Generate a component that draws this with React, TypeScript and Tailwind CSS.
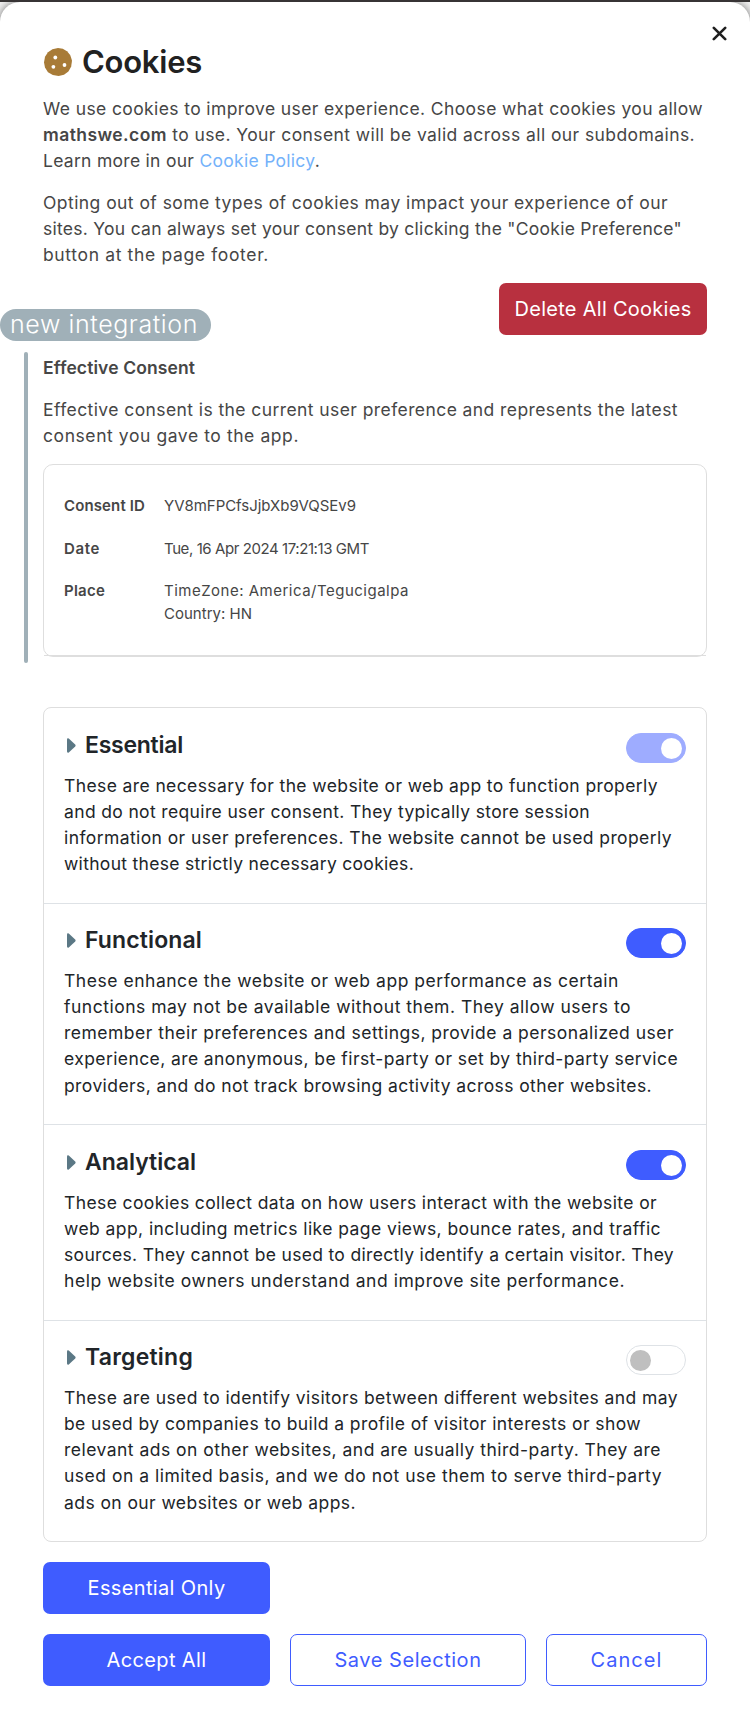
import { useLayoutEffect, useRef, type ReactNode } from "react";

/** A single line of text, tracked out or in so that it fills a given measure. */
function Line({ w, children, className = "" }: { w: number; children: ReactNode; className?: string }) {
  const ref = useRef<HTMLSpanElement>(null);
  useLayoutEffect(() => {
    const el = ref.current;
    if (!el) return;
    el.style.letterSpacing = "0px";
    const natural = el.getBoundingClientRect().width;
    const count = (el.textContent ?? "").length;
    el.style.letterSpacing = `${(w - natural) / count}px`;
  }, [w]);
  return (
    <span ref={ref} className={`block w-max whitespace-nowrap ${className}`}>
      {children}
    </span>
  );
}

type TextLine = [string, number];

function Switch({ on, disabled = false }: { on: boolean; disabled?: boolean }) {
  return (
    <button
      type="button"
      role="switch"
      aria-checked={on}
      className={`flex h-[30px] w-[60px] shrink-0 items-center rounded-full border px-[3px] ${
        on ? "justify-end border-[#3f5cff] bg-[#3f5cff]" : "justify-start border-[#dee2e6] bg-white"
      } ${disabled ? "opacity-50" : ""}`}
    >
      <span className={`h-[21px] w-[21px] rounded-full ${on ? "bg-white" : "bg-[#bfbfbf]"}`} />
    </button>
  );
}

const sections: {
  title: TextLine;
  on: boolean;
  disabled?: boolean;
  box: string;
  lines: TextLine[];
}[] = [
  {
    title: ["Essential", 98],
    on: true,
    disabled: true,
    box: "h-[196px] pt-[25px]",
    lines: [
      ["These are necessary for the website or web app to function properly", 594],
      ["and do not require user consent. They typically store session", 526],
      ["information or user preferences. The website cannot be used properly", 608],
      ["without these strictly necessary cookies.", 350],
    ],
  },
  {
    title: ["Functional", 117],
    on: true,
    box: "h-[221px] pt-[24px]",
    lines: [
      ["These enhance the website or web app performance as certain", 555],
      ["functions may not be available without them. They allow users to", 567],
      ["remember their preferences and settings, provide a personalized user", 610],
      ["experience, are anonymous, be first-party or set by third-party service", 614],
      ["providers, and do not track browsing activity across other websites.", 588],
    ],
  },
  {
    title: ["Analytical", 111],
    on: true,
    box: "h-[196px] pt-[25px]",
    lines: [
      ["These cookies collect data on how users interact with the website or", 593],
      ["web app, including metrics like page views, bounce rates, and traffic", 597],
      ["sources. They cannot be used to directly identify a certain visitor. They", 610],
      ["help website owners understand and improve site performance.", 561],
    ],
  },
  {
    title: ["Targeting", 108],
    on: false,
    box: "h-[220px] pt-[24px]",
    lines: [
      ["These are used to identify visitors between different websites and may", 614],
      ["be used by companies to build a profile of visitor interests or show", 577],
      ["relevant ads on other websites, and are usually third-party. They are", 597],
      ["used on a limited basis, and we do not use them to serve third-party", 598],
      ["ads on our websites or web apps.", 292],
    ],
  },
];

function CookieIcon() {
  return (
    <svg viewBox="0 0 28 28" className="ml-px h-7 w-7">
      <path
        fill="#a87b37"
        d="M14 0 18.8.8 23 3.2 26.2 7 28 12.6 27.2 18.6 24.4 23.6 20 26.8 14.6 28 8.8 27 4 24.2 1 19.6 0 14.4 1 8.8 4 4.2 8.4 1.2Z"
      />
      <circle cx="11.3" cy="9.5" r="1.9" fill="white" />
      <circle cx="9.4" cy="18.8" r="1.9" fill="white" />
      <circle cx="20.5" cy="17" r="1.9" fill="white" />
    </svg>
  );
}

const solid = "flex h-[52px] items-center justify-center rounded-[7px] bg-[#3f5cff] text-white";
const outline =
  "flex h-[52px] items-center justify-center rounded-[7px] border border-[#3f5cff] text-[#3f5cff]";

export default function App() {
  return (
    <div className="h-[1728px] w-[750px] overflow-hidden bg-[#f4f4f4] font-['Inter','Liberation_Sans',sans-serif] text-[17.5px] leading-[26px] text-[#464646]">
      <div className="relative z-10 h-[2px] bg-[#373435]" />
      <main className="relative flex h-[1726px] flex-col rounded-t-[20px] bg-white pr-[43px] pl-[43px] shadow-[0_0_10px_rgba(0,0,0,0.55)]">
        <button type="button" aria-label="Close" className="absolute top-6 right-[23px]">
          <svg viewBox="0 0 15 15" className="h-[15px] w-[15px]" stroke="#1f1f1f" strokeWidth="2.6" strokeLinecap="round">
            <path d="M1.8 1.8 13.2 13.2M13.2 1.8 1.8 13.2" />
          </svg>
        </button>

        <header className="flex h-[92px] items-center gap-[10px] pt-[28px]">
          <CookieIcon />
          <h1 className="text-[31px] font-[570] text-[#212121]">
            <Line w={120}>Cookies</Line>
          </h1>
        </header>

        <p className="mt-[2px]">
          <Line w={660}>We use cookies to improve user experience. Choose what cookies you allow</Line>
          <Line w={652}>
            <strong className="font-semibold">mathswe.com</strong> to use. Your consent will be valid across all our
            subdomains.
          </Line>
          <Line w={277}>
            Learn more in our <a className="text-[#74b2fa]">Cookie Policy</a>.
          </Line>
        </p>
        <p className="mt-4">
          <Line w={625}>Opting out of some types of cookies may impact your experience of our</Line>
          <Line w={639}>sites. You can always set your consent by clicking the "Cookie Preference"</Line>
          <Line w={226}>button at the page footer.</Line>
        </p>

        <div className="mt-[15px] -ml-[43px] flex items-start justify-between">
          <div className="mt-[26px] flex h-8 w-[211px] items-center rounded-full bg-[#a0b0b8] pb-[2px] pl-2.5 text-[25px] font-light text-white">
            <Line w={188}>new integration</Line>
          </div>
          <button type="button" className="flex h-[52px] w-[208px] items-center justify-center rounded-[7px] bg-[#b8303f] text-[20px] text-white">
            <Line w={177}>Delete All Cookies</Line>
          </button>
        </div>

        <section className="mt-[11px] -ml-[19px] flex h-[311px] gap-[15px]">
          <div className="w-1 shrink-0 rounded-sm bg-[#a0b0b8]" />
          <div className="grow pt-[3px]">
            <h2 className="font-semibold">
              <Line w={152}>Effective Consent</Line>
            </h2>
            <p className="mt-4">
              <Line w={635}>Effective consent is the current user preference and represents the latest</Line>
              <Line w={256}>consent you gave to the app.</Line>
            </p>
            <div className="mt-[15px] h-[193px] rounded-[10px] border border-[#dedede]">
              <dl className="grid h-[191px] grid-cols-[100px_1fr] grid-rows-[43px_42px_46px] border-b border-[#dedede] pt-[29px] pl-5 text-[15px] leading-[23px]">
                <dt className="font-semibold"><Line w={81}>Consent ID</Line></dt>
                <dd><Line w={192}>YV8mFPCfsJjbXb9VQSEv9</Line></dd>
                <dt className="font-semibold"><Line w={36}>Date</Line></dt>
                <dd><Line w={205}>Tue, 16 Apr 2024 17:21:13 GMT</Line></dd>
                <dt className="font-semibold"><Line w={41}>Place</Line></dt>
                <dd>
                  <Line w={245}>TimeZone: America/Tegucigalpa</Line>
                  <Line w={88}>Country: HN</Line>
                </dd>
              </dl>
            </div>
          </div>
        </section>

        <section className="mt-11 h-[835px] divide-y divide-[#dee2e6] rounded-[8px] border border-[#dedede] text-[#212529]">
          {sections.map((s) => (
            <article key={s.title[0]} className={`px-5 ${s.box}`}>
              <div className="flex h-10 justify-between">
                <h3 className="flex h-6 items-center text-[23px] font-semibold">
                  <svg viewBox="0 0 9 15" className="mr-[9px] ml-[3px] h-[15px] w-[9px]" fill="#5b7885">
                    <path d="M0 1.4Q.2-.4 1.8.6L8.2 6.5Q9 7.5 8.2 8.5L1.8 14.4Q.2 15.4 0 13.6Z" />
                  </svg>
                  <Line w={s.title[1]}>{s.title[0]}</Line>
                </h3>
                <Switch on={s.on} disabled={s.disabled} />
              </div>
              <p className="leading-[26.15px]">
                {s.lines.map(([text, w]) => (
                  <Line key={text} w={w}>{text}</Line>
                ))}
              </p>
            </article>
          ))}
        </section>

        <div className="mt-5 grid grid-cols-[227px_236px_161px] gap-5 text-[20px]">
          <button type="button" className={solid}><Line w={138}>Essential Only</Line></button>
          <button type="button" className={`col-start-1 ${solid}`}><Line w={100}>Accept All</Line></button>
          <button type="button" className={outline}><Line w={147}>Save Selection</Line></button>
          <button type="button" className={outline}><Line w={72}>Cancel</Line></button>
        </div>
      </main>
    </div>
  );
}
